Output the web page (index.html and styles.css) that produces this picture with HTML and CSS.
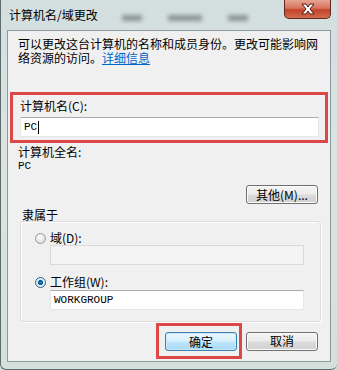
FILE: index.html
```html
<!DOCTYPE html>
<html lang="zh-CN">
<head>
    <meta charset="UTF-8">
    <meta name="viewport" content="width=device-width, initial-scale=1.0">
    <title>计算机名/域更改</title>
    <link rel="stylesheet" href="styles.css">
</head>
<body>
    <div class="window">
        <div class="titlebar">
            <span class="title">计算机名/域更改</span>
            <div class="glass-blur">
                <span class="smudge s1"></span>
                <span class="smudge s2"></span>
                <span class="smudge s3"></span>
            </div>
            <div class="close-btn">
                <svg width="18" height="12" viewBox="0 0 18 12">
                    <path d="M3 1 L7 1 L9 4 L11 1 L15 1 L11 6 L15 11 L11 11 L9 8 L7 11 L3 11 L7 6 Z" fill="#fff" stroke="#4a1a14" stroke-width="1" stroke-linejoin="round"/>
                </svg>
            </div>
        </div>

        <div class="client">
            <p class="intro">可以更改这台计算机的名称和成员身份。更改可能影响网络资源的访问。<a href="#" class="link">详细信息</a></p>

            <div class="name-box">
                <div class="label">计算机名(C):</div>
                <div class="textbox">PC<span class="caret"></span></div>
            </div>

            <div class="label full-label">计算机全名:</div>
            <div class="mono full-name">PC</div>

            <div class="row-right">
                <button class="btn">其他(M)...</button>
            </div>

            <div class="group-title">隶属于</div>
            <div class="group">
                <div class="radio-row">
                    <span class="radio"></span>
                    <span>域(D):</span>
                </div>
                <div class="textbox disabled"></div>

                <div class="radio-row second">
                    <span class="radio checked"></span>
                    <span>工作组(W):</span>
                </div>
                <div class="textbox mono">WORKGROUP</div>
            </div>

            <div class="actions">
                <div class="ok-mark">
                    <button class="btn default">确定</button>
                </div>
                <button class="btn">取消</button>
            </div>
        </div>
    </div>
</body>
</html>
```

FILE: styles.css
```css
body {
    margin: 0;
    background-color: #d6e0df;
    font-family: "Noto Sans CJK SC", "Noto Sans", sans-serif;
    font-size: 12px;
    color: #000;
}

.window {
    width: 337px;
    height: 370px;
    box-sizing: border-box;
    background: linear-gradient(to bottom, #d3dedf 0%, #dbe4e1 40%, #d5e0dc 100%);
    border-left: 1px solid #5f6c6e;
    border-bottom: 1px solid #5f6c6e;
    border-bottom-left-radius: 6px;
    border-bottom-right-radius: 6px;
    padding: 0 6px 7px 6px;
    display: flex;
    flex-direction: column;
}

/* title bar */
.titlebar {
    height: 30px;
    display: flex;
    align-items: center;
    position: relative;
}

.title {
    margin-left: 2px;
    margin-top: -1px;
    line-height: 14px;
    color: #000;
}

.glass-blur {
    display: flex;
    gap: 26px;
    margin-left: 24px;
    margin-top: 6px;
}

.smudge {
    display: block;
    height: 6px;
    background-color: #727c7e;
    filter: blur(2px);
    opacity: 0.75;
}

.s1 { width: 20px; }
.s2 { width: 34px; }
.s3 { width: 20px; }

.close-btn {
    position: absolute;
    top: 0;
    right: 0;
    width: 47px;
    height: 19px;
    box-sizing: border-box;
    border: 1px solid #5c2a22;
    border-top: none;
    border-radius: 0 0 5px 5px;
    background: linear-gradient(to bottom, #e8a493 0%, #d7735c 45%, #c2432a 55%, #d56c4e 100%);
    display: flex;
    align-items: center;
    justify-content: center;
}

/* client area */
.client {
    flex: 1;
    background-color: #f0f0f0;
    border: 1px solid #8c9aa0;
    padding: 6px 11px 0 10px;
    display: flex;
    flex-direction: column;
}

.intro {
    margin: 0;
    line-height: 14px;
    height: 55px;
}

.link {
    display: inline-block;
    line-height: 14px;
    height: 14px;
    color: #0066cc;
}

.label {
    line-height: 14px;
}

.mono {
    font-family: "Liberation Mono", "DejaVu Sans Mono", monospace;
    font-size: 11px;
}

.name-box {
    margin: 0 -9px 0 -8px;
    border: 3px solid #dc4747;
    padding: 4px 6px 3px 7px;
}

.name-box .label {
    margin-bottom: 4px;
}

.textbox {
    height: 20px;
    box-sizing: border-box;
    background-color: #fff;
    border: 1px solid #e2e8ee;
    border-top-color: #abadb3;
    padding: 0 3px;
    line-height: 18px;
    font-family: "Liberation Mono", "DejaVu Sans Mono", monospace;
    font-size: 11px;
    display: flex;
    align-items: center;
}

.caret {
    display: inline-block;
    width: 1px;
    height: 13px;
    background-color: #000;
    margin-left: 1px;
}

.full-label {
    margin-top: 2px;
}

.full-name {
    line-height: 14px;
}

.row-right {
    display: flex;
    justify-content: flex-end;
    margin-top: 12px;
    margin-right: 1px;
}

.btn {
    width: 72px;
    height: 19px;
    padding: 0;
    font-family: "Noto Sans CJK SC", "Noto Sans", sans-serif;
    font-size: 12px;
    color: #000;
    border: 1px solid #707070;
    border-radius: 3px;
    background: linear-gradient(to bottom, #f4f4f4 0%, #ececec 48%, #dcdcdc 52%, #d0d0d0 100%);
    box-shadow: inset 0 0 0 1px #fbfbfb;
    line-height: 16px;
}

.btn.default {
    border-color: #3c7fb1;
    background: linear-gradient(to bottom, #eaf6fd 0%, #d9f0fc 48%, #bee6fd 52%, #a7d9f5 100%);
    box-shadow: inset 0 0 0 1px #c8e8f8;
}

.group-title {
    margin: 4px 0 0 4px;
    line-height: 14px;
}

.group {
    margin: -1px -2px 0 2px;
    border: 1px solid #dcdcdc;
    border-radius: 3px;
    box-shadow: inset 1px 1px 0 #fff, 1px 1px 0 #fff;
    padding: 9px 16px 11px 14px;
    display: flex;
    flex-direction: column;
}

.radio-row {
    display: flex;
    align-items: center;
    gap: 4px;
    line-height: 14px;
}

.radio-row.second {
    margin-top: 10px;
    margin-bottom: 1px;
}

.radio {
    width: 11px;
    height: 11px;
    box-sizing: border-box;
    border-radius: 50%;
    border: 1px solid #9a9a9a;
    background: radial-gradient(circle at 40% 35%, #ffffff 0%, #e4e4e4 60%, #cfcfcf 100%);
}

.radio.checked {
    border-color: #2c628b;
    background: radial-gradient(circle at 50% 50%, #1a83c8 0%, #0f5d91 35%, #d9ecf6 45%, #eef6fb 100%);
}

.group .textbox {
    margin-left: 15px;
}

.textbox.disabled {
    background-color: #f4f4f4;
    border-color: #dadada;
}

.actions {
    display: flex;
    justify-content: flex-end;
    align-items: center;
    gap: 4px;
    margin-top: 1px;
    margin-right: 1px;
}

.ok-mark {
    border: 3px solid #dc4747;
    padding: 6px 2px 5px 6px;
}
```
